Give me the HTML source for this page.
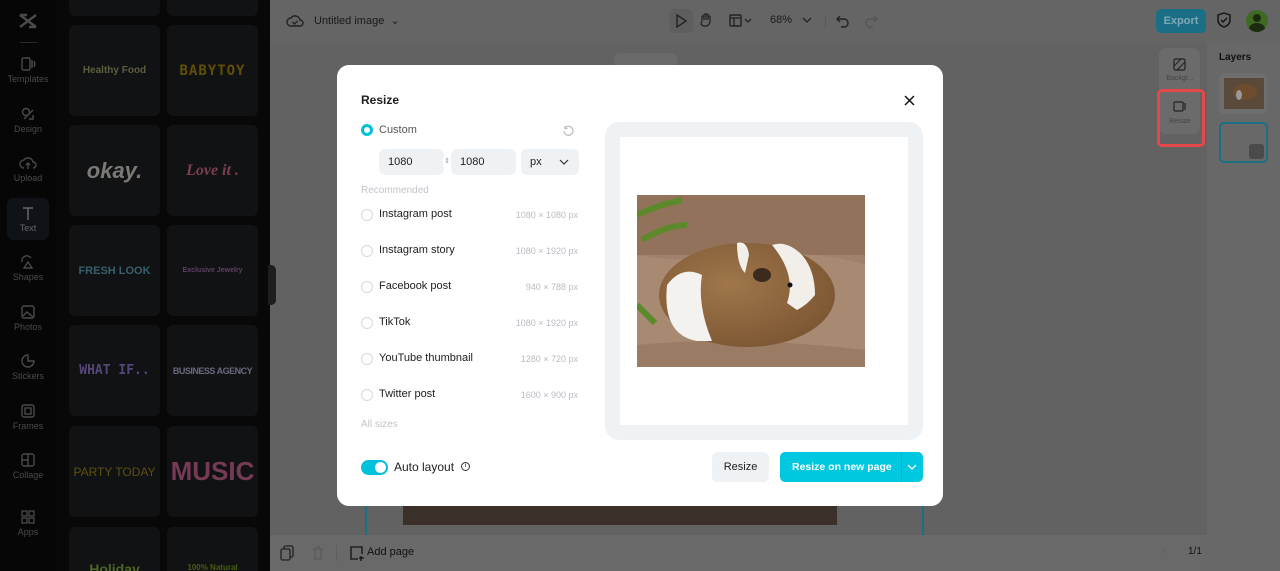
<!DOCTYPE html>
<html style="width:1280px;height:571px;overflow:hidden"><head><meta charset="utf-8"><style>
*{box-sizing:border-box;margin:0;padding:0}
body{width:1280px;height:571px;overflow:hidden;font-family:"Liberation Sans",sans-serif;background:#626263;position:relative}
.abs{position:absolute}
.side{left:0;top:0;width:56px;height:571px;background:#060606;overflow:hidden}
.nav{position:absolute;left:0;width:56px;text-align:center;color:#4a4a4a;font-size:9px}
.nav svg{display:block;margin:0 auto 2px}
.panel{left:56px;top:0;width:214px;height:571px;background:#080808;overflow:hidden}
.card{position:absolute;width:91px;height:91px;background:#111214;border-radius:6px;display:flex;align-items:center;justify-content:center;font-weight:bold;font-size:11px;white-space:nowrap;overflow:hidden}
.top{left:270px;top:0;width:1010px;height:44px;background:#656565}
.bot{left:270px;top:535px;width:937px;height:36px;background:#696969}
.right{left:1207px;top:44px;width:73px;height:527px;background:#686868}
.dlg{left:337px;top:65px;width:606px;height:441px;background:#fff;border-radius:12px}
.t{position:absolute;font-size:11px;color:#1d1d1f}
.radio{position:absolute;width:12px;height:12px;border:1px solid #d5d8dc;border-radius:50%}
.sz{position:absolute;right:365px;font-size:9px;color:#b8bcc2}
.inp{position:absolute;height:26px;background:#eff2f5;border-radius:6px;font-size:11px;color:#1d1d1f;padding:7px 9px}
</style></head><body>
<div class="abs side">
 <div class="nav" style="top:12px"><svg width="20" height="18" viewBox="0 0 20 18"><path d="M2 3 L18 15 M2 15 L18 3 M2 3 H9 M11 15 H18" stroke="#4a4a4a" stroke-width="2.4" fill="none"/></svg></div>
 <div style="position:absolute;left:20px;top:42px;width:17px;height:1px;background:#2a2a2a"></div>
 <div class="nav" style="top:56px"><svg width="16" height="16"><rect x="2" y="2" width="8" height="12" rx="1.5" stroke="#4a4a4a" fill="none" stroke-width="1.4"/><path d="M12 4v8M14.5 5v6" stroke="#4a4a4a" stroke-width="1.4"/></svg>Templates</div>
 <div class="nav" style="top:106px"><svg width="16" height="16"><circle cx="6" cy="6" r="3.5" stroke="#4a4a4a" fill="none" stroke-width="1.4"/><path d="M4 13 L13 4 M9 13h4v-4" stroke="#4a4a4a" fill="none" stroke-width="1.4"/></svg>Design</div>
 <div class="nav" style="top:155px"><svg width="18" height="16"><path d="M5 13a4 4 0 0 1 0-8a5 5 0 0 1 9 2a3 3 0 0 1 0 6M9 14V8M7 10l2-2 2 2" stroke="#4a4a4a" fill="none" stroke-width="1.4"/></svg>Upload</div>
 <div style="position:absolute;left:7px;top:198px;width:42px;height:42px;background:#0f1317;border-radius:7px"></div>
 <div class="nav" style="top:205px;color:#666"><svg width="16" height="16"><path d="M3 3h10M8 3v12" stroke="#666" stroke-width="1.5"/></svg>Text</div>
 <div class="nav" style="top:254px"><svg width="16" height="16"><path d="M2 8a5 5 0 0 1 9-4M8 8l4 6H4z" stroke="#4a4a4a" fill="none" stroke-width="1.4"/></svg>Shapes</div>
 <div class="nav" style="top:304px"><svg width="16" height="16"><rect x="2" y="2" width="12" height="12" rx="2" stroke="#4a4a4a" fill="none" stroke-width="1.4"/><path d="M3 12l4-4 6 5" stroke="#4a4a4a" fill="none" stroke-width="1.4"/></svg>Photos</div>
 <div class="nav" style="top:353px"><svg width="16" height="16"><path d="M8 2a6 6 0 1 0 6 6h-6z" stroke="#4a4a4a" fill="none" stroke-width="1.4"/></svg>Stickers</div>
 <div class="nav" style="top:403px"><svg width="16" height="16"><rect x="2" y="2" width="12" height="12" rx="2" stroke="#4a4a4a" fill="none" stroke-width="1.4"/><rect x="5" y="5" width="6" height="6" stroke="#4a4a4a" fill="none" stroke-width="1.4"/></svg>Frames</div>
 <div class="nav" style="top:452px"><svg width="16" height="16"><rect x="2" y="2" width="12" height="12" rx="2" stroke="#4a4a4a" fill="none" stroke-width="1.4"/><path d="M8 2v12M2 8h6" stroke="#4a4a4a" stroke-width="1.4"/></svg>Collage</div>
 <div class="nav" style="top:509px"><svg width="16" height="16"><g stroke="#4a4a4a" fill="none" stroke-width="1.3"><rect x="2" y="2" width="5" height="5"/><rect x="9" y="2" width="5" height="5"/><rect x="2" y="9" width="5" height="5"/><rect x="9" y="9" width="5" height="5"/></g></svg>Apps</div>
</div>
<div class="abs panel">
 <div class="card" style="left:13px;top:-75px"></div><div class="card" style="left:111px;top:-75px"></div>
 <div class="card" style="left:13px;top:25px;color:#5e5d3e;font-size:10px">Healthy Food</div>
 <div class="card" style="left:111px;top:25px;color:#624f06;font-size:14px;font-family:'DejaVu Sans Mono';letter-spacing:1px">BABYTOY</div>
 <div class="card" style="left:13px;top:125px;color:#7c7a76;font-size:22px;font-style:italic">okay.</div>
 <div class="card" style="left:111px;top:125px;color:#7a4050;font-size:16px;font-family:'Liberation Serif';font-style:italic">Love it .</div>
 <div class="card" style="left:13px;top:225px;color:#38606a;font-size:11px">FRESH LOOK</div>
 <div class="card" style="left:111px;top:225px;color:#5e4262;font-size:7px">Exclusive Jewelry</div>
 <div class="card" style="left:13px;top:325px;color:#55477a;font-size:13px;font-family:'DejaVu Sans Mono'">WHAT IF..</div>
 <div class="card" style="left:111px;top:325px;color:#6a6a7e;font-size:9px;letter-spacing:-.5px">BUSINESS AGENCY</div>
 <div class="card" style="left:13px;top:426px;color:#5e500e;font-size:12px;font-weight:normal">PARTY TODAY</div>
 <div class="card" style="left:111px;top:426px;color:#763a55;font-size:26px">MUSIC</div>
 <div class="card" style="left:13px;top:527px;height:44px;border-radius:6px 6px 0 0;color:#4e6626;font-size:14px;align-items:flex-start;padding-top:34px">Holiday</div>
 <div class="card" style="left:111px;top:527px;height:44px;border-radius:6px 6px 0 0;color:#465e12;font-size:8px;align-items:flex-start;padding-top:36px">100% Natural</div>
</div>
<div class="abs" style="left:268px;top:265px;width:8px;height:40px;background:#1e1e1e;border-radius:0 5px 5px 0"></div>
<div class="abs top">
 <svg class="abs" style="left:16px;top:13px" width="18" height="16"><path d="M5 13a4 4 0 0 1 0-8a5 5 0 0 1 9 2a3 3 0 0 1 0 6z M6.5 9l2 2 3-3" stroke="#222" fill="none" stroke-width="1.4"/></svg>
 <div class="abs" style="left:44px;top:14px;font-size:11px;color:#1a1a1a">Untitled image &nbsp;⌄</div>
 <div class="abs" style="left:399px;top:9px;width:24px;height:24px;background:#5e5e5e;border-radius:5px"></div>
 <svg class="abs" style="left:404px;top:13px" width="14" height="15"><path d="M3 2l9 6-9 6z" stroke="#222" fill="none" stroke-width="1.4"/></svg>
 <svg class="abs" style="left:429px;top:12px" width="14" height="16"><path d="M3 9V5a1 1 0 0 1 2 0v3V3a1 1 0 0 1 2 0v5V3a1 1 0 0 1 2 0v5V5a1 1 0 0 1 2 0v5a5 5 0 0 1-9 2z" stroke="#222" fill="none" stroke-width="1.2"/></svg>
 <svg class="abs" style="left:459px;top:14px" width="24" height="14"><rect x="1" y="1" width="11" height="11" rx="1" stroke="#222" fill="none" stroke-width="1.4"/><path d="M1 4h11M5 4v8M16 5l3 3 3-3" stroke="#222" fill="none" stroke-width="1.3"/></svg>
 <div class="abs" style="left:500px;top:14px;font-size:11px;color:#1a1a1a">68%</div>
 <svg class="abs" style="left:532px;top:16px" width="10" height="8"><path d="M1 2l4 4 4-4" stroke="#222" fill="none" stroke-width="1.3"/></svg>
 <div class="abs" style="left:555px;top:15px;width:1px;height:14px;background:#5a5a5a"></div>
 <svg class="abs" style="left:566px;top:14px" width="14" height="14"><path d="M4 2L1 5l3 3M1 5h7a4 4 0 0 1 0 8H5" stroke="#222" fill="none" stroke-width="1.4"/></svg>
 <svg class="abs" style="left:594px;top:14px" width="14" height="14"><path d="M10 2l3 3-3 3M13 5H6a4 4 0 0 0 0 8h3" stroke="#555" fill="none" stroke-width="1.3"/></svg>
 <div class="abs" style="left:886px;top:9px;width:50px;height:24px;background:#1a6f86;border-radius:5px;color:#7fa8b3;font-size:11px;font-weight:bold;text-align:center;line-height:24px">Export</div>
 <svg class="abs" style="left:947px;top:12px" width="14" height="16"><path d="M7 1l6 2v5c0 4-3 6-6 7c-3-1-6-3-6-7V3z M4 8l2 2 4-4" stroke="#111" fill="none" stroke-width="1.4"/></svg>
 <div class="abs" style="left:976px;top:10px;width:22px;height:22px;border-radius:50%;background:#3f6a22;overflow:hidden"><div style="position:absolute;left:7px;top:4px;width:8px;height:8px;border-radius:50%;background:#1c2a12"></div><div style="position:absolute;left:3px;top:13px;width:16px;height:12px;border-radius:50%;background:#1c2a12"></div></div>
</div>
<div class="abs" style="left:614px;top:53px;width:63px;height:20px;background:#6a6a6a;border-radius:6px"></div>
<div class="abs" style="left:365px;top:500px;width:2px;height:35px;background:#1a6f80"></div>
<div class="abs" style="left:922px;top:500px;width:2px;height:35px;background:#1a6f80"></div>
<div class="abs" style="left:403px;top:500px;width:434px;height:25px;background:#3a3029"></div>
<div class="abs bot">
 <svg class="abs" style="left:10px;top:10px" width="14" height="16"><rect x="4" y="1" width="9" height="11" rx="1.5" stroke="#222" fill="none" stroke-width="1.3"/><rect x="1" y="4" width="9" height="11" rx="1.5" stroke="#222" fill="#696969" stroke-width="1.3"/></svg>
 <svg class="abs" style="left:41px;top:10px" width="14" height="16"><path d="M2 4h10M4 4v10h6V4M5 2h4" stroke="#5a5a5a" fill="none" stroke-width="1.3"/></svg>
 <div class="abs" style="left:66px;top:10px;width:1px;height:16px;background:#5e5e5e"></div>
 <svg class="abs" style="left:79px;top:10px" width="16" height="16"><path d="M9 14H2V2h11v7M12 11v5M10 13h5" stroke="#111" fill="none" stroke-width="1.3"/></svg>
 <div class="abs" style="left:97px;top:11px;font-size:11px;color:#111">Add page</div>
 <div class="abs" style="left:892px;top:10px;font-size:11px;color:#5a5a5a">‹</div>
 <div class="abs" style="left:918px;top:11px;font-size:10px;color:#111">1/1</div>
</div>
<svg class="abs" style="left:1255px;top:546px" width="14" height="14"><path d="M1 12h12M3 12V7h8v5M5 7l2-4 2 4" stroke="#111" fill="none" stroke-width="1.3"/></svg>
<div class="abs" style="left:1159px;top:48px;width:41px;height:86px;background:#6b6b6b;border-radius:7px"></div>
<svg class="abs" style="left:1173px;top:58px" width="13" height="13"><rect x="1" y="1" width="11" height="11" rx="1.5" stroke="#222" fill="none" stroke-width="1.2"/><path d="M1 8l7-7M4 12l8-8" stroke="#222" stroke-width="1"/></svg>
<div class="abs" style="left:1161px;top:75px;font-size:7px;color:#444;width:38px;text-align:center">Backgr...</div>
<svg class="abs" style="left:1173px;top:100px" width="13" height="12"><rect x="1" y="2" width="9" height="9" rx="1" stroke="#222" fill="none" stroke-width="1.2"/><path d="M12 3v7" stroke="#222" stroke-width="1.2"/></svg>
<div class="abs" style="left:1161px;top:118px;font-size:7px;color:#444;width:38px;text-align:center">Resize</div>
<div class="abs" style="left:1157px;top:89px;width:48px;height:58px;border:3px solid #e5484a;border-radius:5px"></div>
<div class="abs right">
 <div class="abs" style="left:12px;top:8px;font-size:10px;font-weight:bold;color:#111">Layers</div>
 <div class="abs" style="left:12px;top:29px;width:48px;height:41px;background:#6e6e6e;border-radius:5px"><div style="position:absolute;left:5px;top:5px;width:40px;height:31px;background:#5a4a3c"><div style="position:absolute;left:9px;top:6px;width:24px;height:16px;border-radius:50%;background:#6e4c2c"></div><div style="position:absolute;left:12px;top:12px;width:6px;height:10px;border-radius:50%;background:#999"></div></div></div>
 <div class="abs" style="left:12px;top:78px;width:49px;height:41px;border:2px solid #1a6f80;border-radius:5px"><div style="position:absolute;right:2px;bottom:2px;width:15px;height:15px;background:#4a4a4a;border-radius:3px"></div></div>
</div>
<div class="abs dlg">
 <div class="t" style="left:24px;top:28px;font-size:12px;font-weight:bold">Resize</div>
 <svg class="abs" style="left:567px;top:30px" width="11" height="11"><path d="M1 1l9 9M10 1l-9 9" stroke="#111" stroke-width="1.5"/></svg>
 <div class="abs" style="left:24px;top:59px;width:12px;height:12px;border-radius:50%;border:3.5px solid #00c1dc;background:#fff"></div>
 <div class="t" style="left:42px;top:59px;color:#555">Custom</div>
 <svg class="abs" style="left:226px;top:60px" width="11" height="11"><path d="M2 3a4.5 4.5 0 1 1-1 3M2 1v2.5h2.5" stroke="#bbb" fill="none" stroke-width="1.2"/></svg>
 <div class="inp" style="left:42px;top:84px;width:65px">1080</div>
 <div class="abs" style="left:106px;top:92px;width:8px;height:10px;background:#fff;border-radius:2px;font-size:7px;color:#999;text-align:center;line-height:10px">⇕</div>
 <div class="inp" style="left:114px;top:84px;width:65px">1080</div>
 <div class="inp" style="left:184px;top:84px;width:58px">px<svg style="position:absolute;right:10px;top:10px" width="10" height="7"><path d="M1 1l4 4 4-4" stroke="#333" fill="none" stroke-width="1.2"/></svg></div>
 <div class="t" style="left:24px;top:120px;color:#c0c4ca;font-size:10px">Recommended</div>
 <div class="radio" style="left:24px;top:144px"></div><div class="t" style="left:42px;top:143px">Instagram post</div><div class="sz" style="top:145px">1080 × 1080 px</div>
 <div class="radio" style="left:24px;top:180px"></div><div class="t" style="left:42px;top:179px">Instagram story</div><div class="sz" style="top:181px">1080 × 1920 px</div>
 <div class="radio" style="left:24px;top:216px"></div><div class="t" style="left:42px;top:215px">Facebook post</div><div class="sz" style="top:217px">940 × 788 px</div>
 <div class="radio" style="left:24px;top:252px"></div><div class="t" style="left:42px;top:251px">TikTok</div><div class="sz" style="top:253px">1080 × 1920 px</div>
 <div class="radio" style="left:24px;top:288px"></div><div class="t" style="left:42px;top:287px">YouTube thumbnail</div><div class="sz" style="top:289px">1280 × 720 px</div>
 <div class="radio" style="left:24px;top:324px"></div><div class="t" style="left:42px;top:323px">Twitter post</div><div class="sz" style="top:325px">1600 × 900 px</div>
 <div class="t" style="left:24px;top:354px;color:#c0c4ca;font-size:10px">All sizes</div>
 <div class="abs" style="left:268px;top:57px;width:318px;height:318px;background:#eff2f5;border-radius:14px"></div>
 <div class="abs" style="left:283px;top:72px;width:288px;height:288px;background:#fff"></div>
 <svg class="abs" style="left:300px;top:130px" width="228" height="172" viewBox="0 0 228 172">
  <defs><radialGradient id="g" cx=".4" cy=".4" r=".7"><stop offset="0" stop-color="#a0764a"/><stop offset="1" stop-color="#7a5432"/></radialGradient></defs>
  <rect width="228" height="172" fill="#a0816b"/>
  <rect y="0" width="228" height="60" fill="#93725c"/>
  <path d="M0 60 Q60 70 120 62 T228 70 V172 H0z" fill="#a88a73"/>
  <path d="M0 150 Q100 140 228 155 V172 H0z" fill="#9a7c65"/>
  <path d="M0 20 Q20 10 45 5 M5 45 Q30 30 50 30" stroke="#5c8a2a" stroke-width="6" fill="none"/>
  <path d="M0 110 Q10 120 18 128" stroke="#5c8a2a" stroke-width="6" fill="none"/>
  <ellipse cx="110" cy="100" rx="88" ry="52" fill="url(#g)"/>
  <path d="M30 90 Q25 140 60 146 L75 146 Q60 110 65 80 Q45 70 30 90z" fill="#f4f2ee"/>
  <path d="M135 50 Q150 45 165 60 Q178 75 178 100 Q170 110 160 115 L150 108 Q160 80 135 50z" fill="#f2efea"/>
  <path d="M100 48 Q110 45 112 60 L108 78 Q100 70 100 48z" fill="#f2efea"/>
  <ellipse cx="125" cy="80" rx="9" ry="7" fill="#3b2a1e"/>
  <circle cx="153" cy="90" r="2.5" fill="#111"/>
 </svg>
 <div class="abs" style="left:24px;top:395px;width:27px;height:15px;background:#00c1dc;border-radius:8px"><div style="position:absolute;right:2px;top:2px;width:11px;height:11px;border-radius:50%;background:#fff"></div></div>
 <div class="t" style="left:57px;top:395px;font-size:12px">Auto layout</div>
 <div class="abs" style="left:124px;top:397px;width:9px;height:9px;border:1px solid #333;border-radius:50%;font-size:6px;text-align:center;line-height:7px">i</div>
 <div class="abs" style="left:375px;top:387px;width:57px;height:30px;background:#eff2f5;border-radius:5px;font-size:11px;color:#1d1d1f;text-align:center;line-height:30px">Resize</div>
 <div class="abs" style="left:443px;top:387px;width:143px;height:30px;background:#00c8e0;border-radius:5px;font-size:10.5px;font-weight:bold;color:#fff;line-height:30px;padding-left:12px;white-space:nowrap">Resize on new page<div style="position:absolute;left:121px;top:0;width:1px;height:30px;background:#00b4cc"></div><svg style="position:absolute;left:127px;top:12px" width="10" height="7"><path d="M1 1l4 4 4-4" stroke="#fff" fill="none" stroke-width="1.3"/></svg></div>
</div>
</body></html>
